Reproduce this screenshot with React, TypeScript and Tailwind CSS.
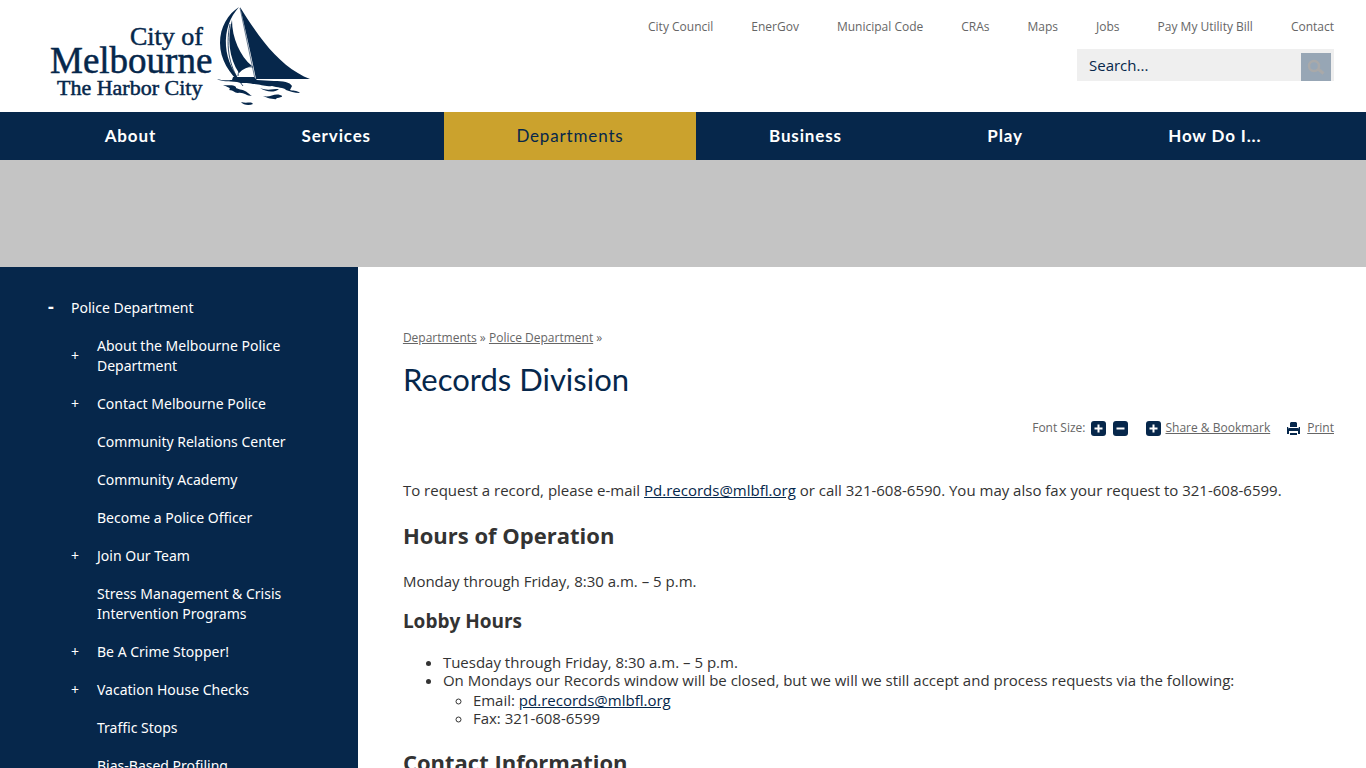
const topLinks = ['City Council', 'EnerGov', 'Municipal Code', 'CRAs', 'Maps', 'Jobs', 'Pay My Utility Bill', 'Contact'];

const navItems = ['About', 'Services', 'Departments', 'Business', 'Play', 'How Do I...'];

const sideItems = [
  { label: 'About the Melbourne Police Department', expandable: true },
  { label: 'Contact Melbourne Police', expandable: true },
  { label: 'Community Relations Center', expandable: false },
  { label: 'Community Academy', expandable: false },
  { label: 'Become a Police Officer', expandable: false },
  { label: 'Join Our Team', expandable: true },
  { label: 'Stress Management & Crisis Intervention Programs', expandable: false },
  { label: 'Be A Crime Stopper!', expandable: true },
  { label: 'Vacation House Checks', expandable: true },
  { label: 'Traffic Stops', expandable: false },
  { label: 'Bias-Based Profiling', expandable: false },
];

function Logo() {
  return (
    <svg width="270" height="108" viewBox="0 0 270 108" fill="#06274b" role="img" aria-label="City of Melbourne, The Harbor City">
      <g fontFamily="'Liberation Serif', serif" stroke="#06274b" strokeWidth="0.5">
        <text x="82" y="45" fontSize="26">City of</text>
        <text x="2" y="73" fontSize="37">Melbourne</text>
        <text x="9" y="95" fontSize="22">The Harbor City</text>
      </g>
      <path d="M192 7C197 28 203 54 208 79L262 79C246 73 229 59 216 42C206 29 198 17 192 7Z" />
      <path d="M191 7C180 14 172 27 172 43C172 59 181 74 194 84C186 73 179 61 178 46C177 30 182 17 191 7Z" />
      <path d="M184 20C179 38 181 58 191 73C195 69 199 67 204 66C192 56 184 38 184 20Z" />
      <path d="M190 76C190 69 196 66 205 67" fill="none" stroke="#06274b" strokeWidth="0.8" />
      <path d="M182 24C177 48 182 70 195 86" fill="none" stroke="#06274b" strokeWidth="0.8" />
      <path d="M192 8L207 79" fill="none" stroke="#06274b" strokeWidth="0.6" />
      <path d="M169 79C175 81 181 80 184 80L185 77L206 77L209 80L226 81C235 81 242 82 244 86L242 90C244 91 249 90 252 93C246 93 242 91 238 90C236 87 229 88 224 86C216 87 213 84 205 84C199 82 194 84 189 82C181 81 174 82 169 79Z" />
      <path d="M175 85C181 86 184 84 188 87C187 89 193 89 197 91C201 93 203 96 204 96C198 96 196 92 190 93C186 93 186 90 181 90C184 88 179 87 175 85Z" />
      <path d="M212 88C219 91 224 89 231 89C226 93 218 92 212 88Z" />
      <path d="M215 96C222 98 226 93 232 95C237 96 232 98 228 98C231 100 224 99 220 98Z" />
      <path d="M193 102C199 104 203 101 205 104C201 106 195 105 193 102Z" />
    </svg>
  );
}

function SizeIcon({ plus }: { plus: boolean }) {
  return (
    <svg width="15" height="15" viewBox="0 0 15 15" aria-hidden="true">
      <rect width="15" height="15" rx="3" fill="#06274b" />
      <path d={plus ? 'M3.500 7.500H11.500M7.500 3.500V11.500' : 'M3.500 7.500H11.500'} stroke="#fff" strokeWidth="2" />
    </svg>
  );
}

function PrintIcon() {
  return (
    <svg width="15" height="15" viewBox="0 0 15 15" fill="#06274b" aria-hidden="true">
      <path d="M4 2L5 1H10L11 2V6H4Z" />
      <path d="M1 6H2L3 8H12L13 6H14V13H12V10H3V13H1Z" />
      <path d="M3 7H12V10H3ZM4 12H11V14H4Z" />
    </svg>
  );
}

export default function App() {
  return (
    <div className="h-screen overflow-hidden flex flex-col bg-white font-['Open_Sans',sans-serif] text-[#333]">
      <header className="flex h-28 shrink-0 justify-between pr-8 pl-12">
        <a href="#home" className="block">
          <Logo />
        </a>
        <div className="flex flex-col items-end pt-[17px]">
          <nav aria-label="Quick links" className="flex gap-[38px] text-xs leading-5 text-[#666]">
            {topLinks.map((t) => (
              <a key={t} href="#top">{t}</a>
            ))}
          </nav>
          <form className="mt-3 flex h-8 w-[257px] items-end bg-[#efefef] pr-[3px]">
            <input
              type="text"
              aria-label="Search"
              placeholder="Search..."
              className="h-8 min-w-0 flex-1 bg-transparent pl-3 text-[15px] outline-none placeholder:text-[#06274b]"
            />
            <button type="button" aria-label="Search" className="flex h-7 w-[30px] items-center justify-center bg-[#97a6b5]">
              <svg width="18" height="18" viewBox="0 0 18 18" fill="none" stroke="#a9a9a9" aria-hidden="true">
                <circle cx="7" cy="8" r="5" strokeWidth="2.500" />
                <path d="M11 11L16.500 15.500" strokeWidth="3" />
              </svg>
            </button>
          </form>
        </div>
      </header>

      <nav aria-label="Main" className="flex h-12 shrink-0 bg-[#06274b] px-8 font-['Lato',sans-serif] text-[17px] font-bold tracking-wider text-white">
        {navItems.map((t) => (
          <a
            key={t}
            href="#nav"
            className={
              t === 'Departments'
                ? 'flex flex-auto items-center justify-center bg-[#cba22d] font-normal text-[#06274b]'
                : 'flex flex-auto items-center justify-center'
            }
          >
            {t}
          </a>
        ))}
      </nav>

      <div className="h-[107px] shrink-0 bg-[#c4c4c4]" />

      <div className="flex min-h-0 flex-1">
        <aside className="w-[26.2%] shrink-0 overflow-hidden bg-[#06274b] pt-[31px] pr-12 pl-12 font-['Noto_Sans',sans-serif] text-sm leading-5 text-white">
          <div className="flex items-start pb-[18px]">
            <button type="button" aria-label="Collapse Police Department" className="w-[23px] shrink-0 text-left text-lg leading-4 font-bold">-</button>
            <a href="#police">Police Department</a>
          </div>
          <ul className="pl-[23px]">
            {sideItems.map((s) => (
              <li key={s.label} className="flex items-center pb-[18px]">
                <span className="w-[26px] shrink-0">
                  {s.expandable && (
                    <button type="button" aria-label={`Expand ${s.label}`} className="block text-sm leading-4">+</button>
                  )}
                </span>
                <a href="#item">{s.label}</a>
              </li>
            ))}
          </ul>
        </aside>

        <main className="min-w-0 flex-1 overflow-hidden pt-[61px] pr-8 pl-[45px] text-[15px] leading-5">
          <nav aria-label="Breadcrumb" className="text-xs leading-5 text-[#666]">
            <a href="#departments" className="underline">Departments</a> »{' '}
            <a href="#police" className="underline">Police Department</a> »
          </nav>
          <h1 className="mt-[11px] font-['Lato',sans-serif] text-[31px] leading-10 text-[#06274b]">Records Division</h1>
          <div className="mt-[19px] flex h-5 items-center justify-end text-xs text-[#666]">
            <span className="mr-1.5">Font Size:</span>
            <button type="button" aria-label="Increase font size" className="mr-[7px]"><SizeIcon plus /></button>
            <button type="button" aria-label="Decrease font size" className="mr-[18px]"><SizeIcon plus={false} /></button>
            <a href="#share" className="mr-4 flex items-center gap-1">
              <SizeIcon plus />
              <span className="underline">Share &amp; Bookmark</span>
            </a>
            <a href="#print" className="flex items-center gap-1.5">
              <PrintIcon />
              <span className="underline">Print</span>
            </a>
          </div>
          <p className="mt-[42px]">
            To request a record, please e-mail{' '}
            <a href="#mail" className="text-[#06274b] underline">Pd.records@mlbfl.org</a>{' '}
            or call 321-608-6590. You may also fax your request to 321-608-6599.
          </p>
          <h2 className="mt-[19px] text-[22px] leading-8 font-bold">Hours of Operation</h2>
          <p className="mt-5">Monday through Friday, 8:30 a.m. – 5 p.m.</p>
          <h3 className="mt-4 text-[19px] leading-7 font-bold">Lobby Hours</h3>
          <ul className="mt-[18px] list-disc pl-10 leading-[18px]">
            <li>Tuesday through Friday, 8:30 a.m. – 5 p.m.</li>
            <li>
              On Mondays our Records window will be closed, but we will we still accept and process requests via the following:
              <ul className="list-[circle] pt-0.5 pl-[30px]">
                <li>Email: <a href="#mail" className="text-[#06274b] underline">pd.records@mlbfl.org</a></li>
                <li>Fax: 321-608-6599</li>
              </ul>
            </li>
          </ul>
          <h2 className="mt-[19px] text-[22px] leading-8 font-bold">Contact Information</h2>
        </main>
      </div>
    </div>
  );
}
